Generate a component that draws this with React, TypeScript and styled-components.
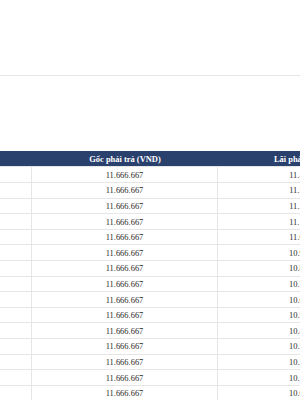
import React from "react";
import styled, { createGlobalStyle } from "styled-components";

const GlobalStyle = createGlobalStyle`
  html, body {
    margin: 0;
    padding: 0;
    background: #ffffff;
    overflow: hidden;
  }
  body {
    font-family: "Liberation Serif", "Times New Roman", serif;
  }
`;

const Page = styled.div`
  width: 300px;
  height: 400px;
  overflow: hidden;
  background: #ffffff;
`;

const TopBar = styled.div`
  height: 75px;
  border-bottom: 1px solid #e6e6e6;
`;

const Table = styled.div`
  margin-top: 74.9px;
  width: 600px;
  display: flex;
  flex-direction: column;
`;

const cols = "32px 186px 181px 201px";

const HeaderRow = styled.div`
  display: grid;
  grid-template-columns: ${cols};
  height: 15.6px;
  background: #2a406d;
  box-sizing: border-box;
`;

const HeaderCell = styled.div`
  display: flex;
  align-items: center;
  justify-content: center;
  color: #ffffff;
  font-weight: 700;
  font-size: 8.45px;
  white-space: nowrap;
`;

const Row = styled.div`
  display: grid;
  grid-template-columns: ${cols};
  height: 15.6px;
  box-sizing: border-box;
  border-top: 1px solid #e6e6e6;
`;

const Cell = styled.div<{ $last?: boolean }>`
  display: flex;
  align-items: center;
  justify-content: center;
  box-sizing: border-box;
  border-right: ${(p) => (p.$last ? "none" : "1px solid #e6e6e6")};
  color: #2a2a2a;
  font-size: 8.45px;
  white-space: nowrap;
`;

const fmt = (n: number) =>
  Math.round(n)
    .toString()
    .replace(/\B(?=(\d{3})+(?!\d))/g, ".");

const LOAN = 1400000000;
const MONTHS = 120;
const RATE = 0.105;
const principal = LOAN / MONTHS;

const rows = Array.from({ length: 16 }, (_, i) => {
  const month = 9 + i;
  const balance = LOAN - (month - 1) * principal;
  return { month, principal, interest: (balance * RATE) / 12 };
});

export default function App() {
  return (
    <Page>
      <GlobalStyle />
      <TopBar />
      <Table>
        <HeaderRow>
          <HeaderCell />
          <HeaderCell>Gốc phải trả (VND)</HeaderCell>
          <HeaderCell>Lãi phải trả (VND)</HeaderCell>
          <HeaderCell>Tổng phải trả (VND)</HeaderCell>
        </HeaderRow>
        {rows.map((r) => (
          <Row key={r.month}>
            <Cell />
            <Cell>{fmt(r.principal)}</Cell>
            <Cell>{fmt(r.interest)}</Cell>
            <Cell $last>{fmt(r.principal + r.interest)}</Cell>
          </Row>
        ))}
      </Table>
    </Page>
  );
}
